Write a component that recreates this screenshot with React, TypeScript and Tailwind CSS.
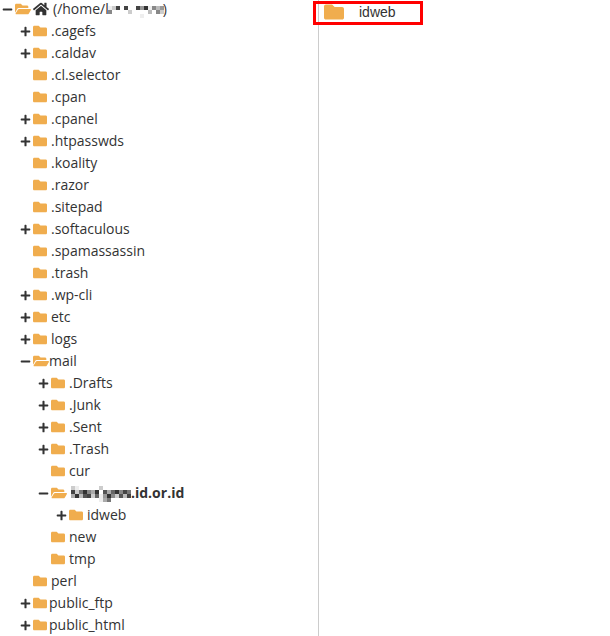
import { FaFolder, FaFolderOpen, FaHome, FaMinus, FaPlus } from 'react-icons/fa'

type Node = {
  name: string
  state?: 'open' | 'closed'
  tight?: boolean
  active?: boolean
  children?: Node[]
}

const tree: Node[] = [
  { name: '.cagefs', state: 'closed' },
  { name: '.caldav', state: 'closed' },
  { name: '.cl.selector' },
  { name: '.cpan' },
  { name: '.cpanel', state: 'closed' },
  { name: '.htpasswds', state: 'closed' },
  { name: '.koality' },
  { name: '.razor' },
  { name: '.sitepad' },
  { name: '.softaculous', state: 'closed' },
  { name: '.spamassassin' },
  { name: '.trash' },
  { name: '.wp-cli', state: 'closed' },
  { name: 'etc', state: 'closed' },
  { name: 'logs', state: 'closed' },
  {
    name: 'mail',
    state: 'open',
    tight: true,
    children: [
      { name: '.Drafts', state: 'closed' },
      { name: '.Junk', state: 'closed' },
      { name: '.Sent', state: 'closed' },
      { name: '.Trash', state: 'closed' },
      { name: 'cur' },
      {
        name: '.id.or.id',
        state: 'open',
        active: true,
        children: [{ name: 'idweb', state: 'closed' }],
      },
      { name: 'new' },
      { name: 'tmp' },
    ],
  },
  { name: 'perl' },
  { name: 'public_ftp', state: 'closed', tight: true },
  { name: 'public_html', state: 'closed', tight: true },
]

// Rows of grey levels (hex digit, f = empty), one digit per 4px block
const HOME_MASK = ['ec4f4ff493e8b9', '8ffffcffffbf8c', 'ffffffffefffff']
const DOMAIN_MASK = ['cefffffcfffffff', '4c738a3f5a63847', 'a3b54c6e938c5b4', 'fffffffea7fffff']

function Mosaic({ rows, className }: { rows: string[]; className: string }) {
  return (
    <svg
      width={rows[0].length * 4}
      height={rows.length * 4}
      shapeRendering="crispEdges"
      className={className}
      aria-hidden="true"
    >
      {rows.flatMap((row, y) =>
        [...row].map((c, x) =>
          c === 'f' ? null : (
            <rect key={`${x}-${y}`} x={x * 4} y={y * 4} width={4} height={4} fill={`#${c}${c}${c}`} />
          )
        )
      )}
    </svg>
  )
}

function Toggle({ state }: { state?: 'open' | 'closed' }) {
  if (!state) return <span className="w-[13px] shrink-0" />
  return (
    <button type="button" aria-label={state === 'open' ? 'Collapse' : 'Expand'} className="w-[13px] shrink-0">
      {state === 'open' ? <FaMinus size={11} /> : <FaPlus size={11} />}
    </button>
  )
}

function labelClass(node: Node) {
  if (node.active) return 'ml-1 flex items-center font-bold'
  if (node.state === 'open') return ''
  return node.tight ? 'ml-0.5' : 'ml-1'
}

function TreeItem({ node }: { node: Node }) {
  return (
    <li>
      <div className="flex h-[22px] items-center">
        <Toggle state={node.state} />
        {node.state === 'open' ? (
          <FaFolderOpen size={16} className="shrink-0 text-[#f0ad4e]" />
        ) : (
          <FaFolder size={14} className="shrink-0 text-[#f0ad4e]" />
        )}
        <span className={labelClass(node)}>
          {node.active && <Mosaic rows={DOMAIN_MASK} className="mt-0.5" />}
          {node.name}
        </span>
      </div>
      {node.children && (
        <ul className="ml-[18px]">
          {node.children.map((child) => (
            <TreeItem key={child.name} node={child} />
          ))}
        </ul>
      )}
    </li>
  )
}

export default function App() {
  return (
    <div className="flex min-h-screen overflow-hidden bg-white font-['Open_Sans',sans-serif] text-sm text-[#333]">
      <nav className="-mt-0.5 w-[319px] shrink-0 border-r border-[#ccc] pl-0.5 whitespace-nowrap">
        <div className="flex h-[22px] items-center">
          <Toggle state="open" />
          <FaFolderOpen size={16} className="text-[#f0ad4e]" />
          <FaHome size={16} className="ml-0.5" />
          <span className="ml-1 flex items-center">
            (/home/l
            <Mosaic rows={HOME_MASK} className="-mx-px mt-1.5" />
            )
          </span>
        </div>
        <ul className="ml-[18px]">
          {tree.map((node) => (
            <TreeItem key={node.name} node={node} />
          ))}
        </ul>
      </nav>
      <main className="min-w-0 flex-1">
        <div className="-ml-1.5 mt-px flex h-6 w-[110px] items-center border-3 border-[#f00] pb-0.5 pl-2 font-['Liberation_Sans',sans-serif]">
          <FaFolder size={20} className="text-[#f0ad4e]" />
          <span className="ml-[15px]">idweb</span>
        </div>
      </main>
    </div>
  )
}
